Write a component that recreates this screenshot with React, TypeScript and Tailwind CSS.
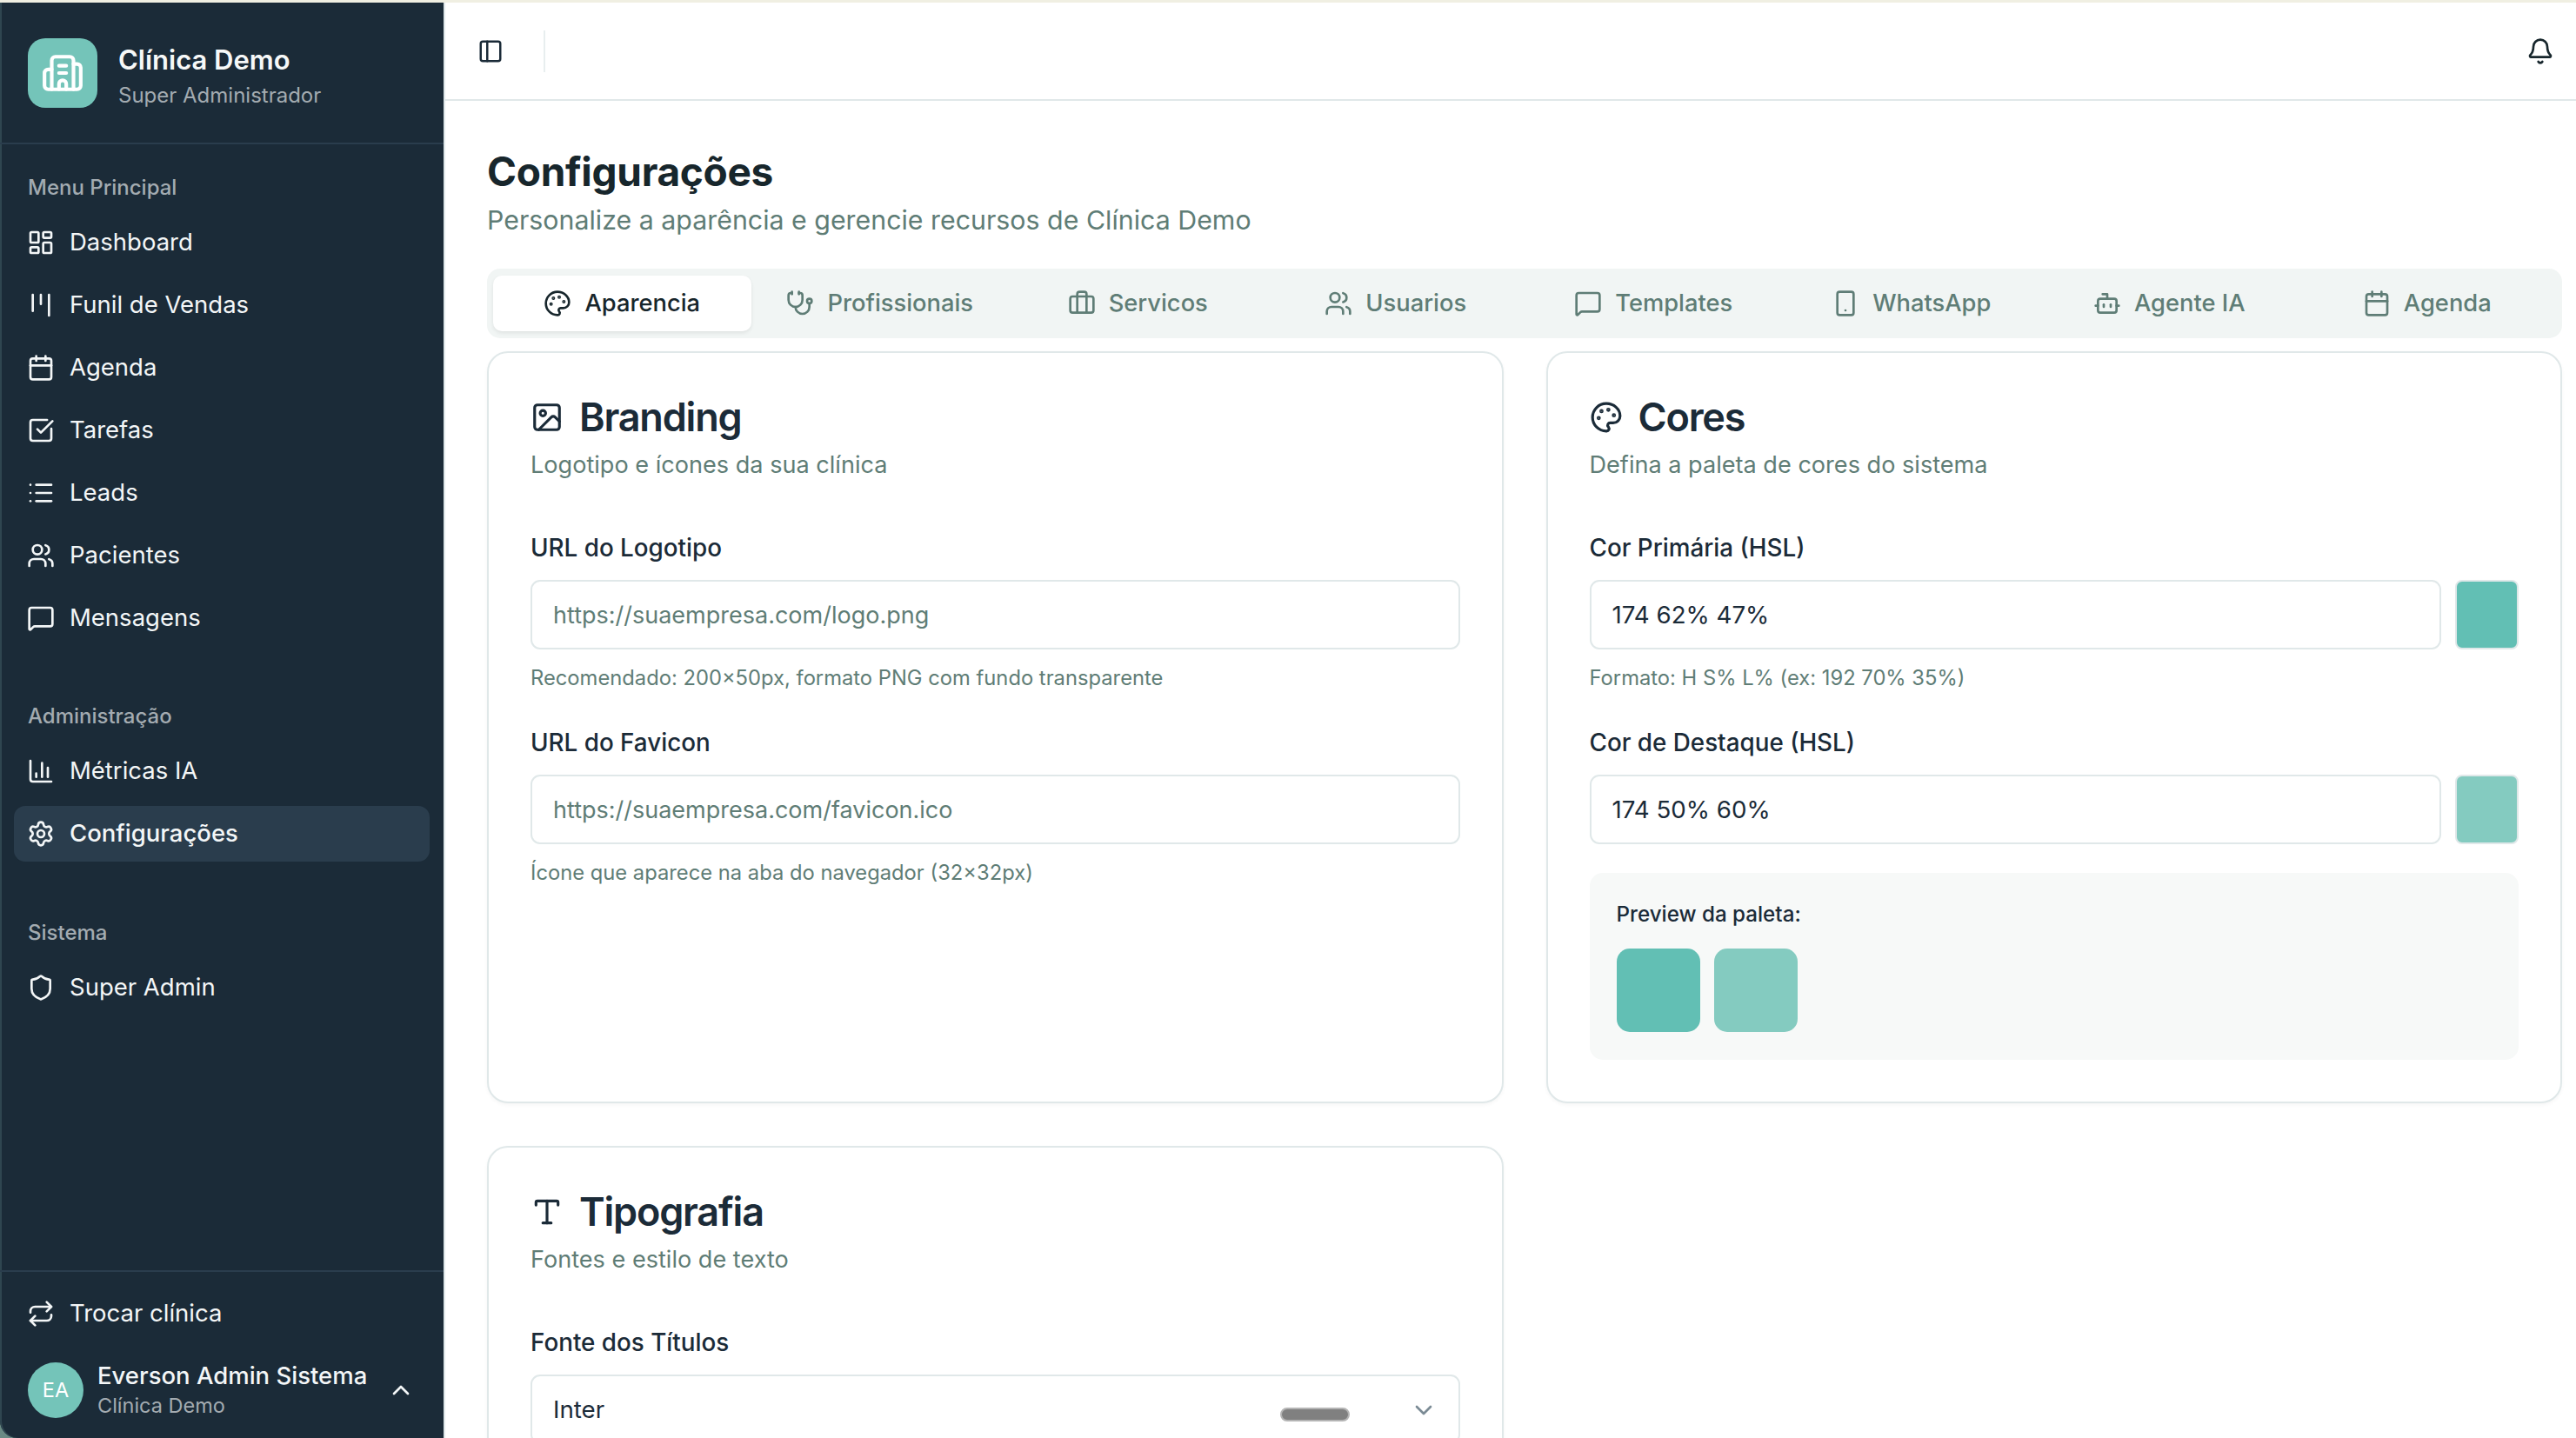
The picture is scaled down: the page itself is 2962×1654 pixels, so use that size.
import { Bell, Bot, Briefcase, Building2, Calendar, ChartColumn, ChevronDown, ChevronUp, Image, Kanban, LayoutDashboard, List, MessageSquare, Palette, PanelLeft, Repeat, Settings, Shield, Smartphone, SquareCheckBig, Stethoscope, Type, Users } from "lucide-react";
import type { ComponentType } from "react";

type Ic = ComponentType<{ className?: string; strokeWidth?: number }>;

function NavItem({ icon: I, label, active }: { icon: Ic; label: string; active?: boolean }) {
  return (
    <div className={`flex h-[64px] items-center gap-[17px] rounded-[13px] px-[15px] text-[27.5px] text-[#f3f6f7] ${active ? "bg-[#2a3d4d] font-medium" : ""}`}>
      <I className="size-[32px] shrink-0" strokeWidth={2} />
      <span>{label}</span>
    </div>
  );
}

function SectionLabel({ children }: { children: string }) {
  return <div className="flex h-[63px] items-center px-[16px] text-[24px] font-medium text-[#a3abb1]">{children}</div>;
}

function Tab({ icon: I, label, active }: { icon: Ic; label: string; active?: boolean }) {
  return (
    <div className={`flex h-[64px] items-center justify-center gap-[15px] rounded-[10px] text-[27.3px] font-medium ${active ? "bg-white text-[#17262c] shadow-[0_2px_4px_rgba(0,0,0,0.08)]" : "text-[#5f7d76]"}`}>
      <I className="size-[32px] shrink-0" strokeWidth={2} />
      <span>{label}</span>
    </div>
  );
}

function Card({ className, children }: { className?: string; children: React.ReactNode }) {
  return <div className={`rounded-[24px] border-2 border-[#e0e8e9] bg-white px-[48px] pt-[46px] shadow-[0_2px_4px_rgba(0,0,0,0.04)] ${className ?? ""}`}>{children}</div>;
}

function CardHead({ icon: I, title, desc }: { icon: Ic; title: string; desc: string }) {
  return (
    <div>
      <div className="flex h-[56px] items-center gap-[18px] text-[45px] font-semibold tracking-[-1.2px] text-[#1b2b38]">
        <I className="size-[38px] shrink-0" strokeWidth={2} />
        <span>{title}</span>
      </div>
      <div className="mt-[7px] h-[40px] text-[27.1px] leading-[40px] text-[#5f7d76]">{desc}</div>
    </div>
  );
}

function Field({ label, value, placeholder, hint, color }: { label: string; value?: string; placeholder?: string; hint?: string; color?: string }) {
  return (
    <div>
      <div className="flex h-[40px] items-center text-[27.8px] font-medium text-[#1b2b38]">{label}</div>
      <div className="mt-[16px] flex gap-[16px]">
        <div className={`flex h-[80px] flex-1 items-center rounded-[11px] border-2 border-[#e0e8e9] px-[24px] pt-[2px] ${placeholder ? "text-[27px] text-[#5f7d76]" : "text-[27.7px] text-[#1b2b38]"}`}>
          {value ?? placeholder}
        </div>
        {color && <div className={`h-[80px] w-[73px] rounded-[8px] border-2 border-[#e0e8e9] ${color}`} />}
      </div>
      {hint && <div className="mt-[16px] flex h-[34px] items-center text-[23.75px] text-[#5f7d76]">{hint}</div>}
    </div>
  );
}

const nav1: [Ic, string][] = [
  [LayoutDashboard, "Dashboard"],
  [Kanban, "Funil de Vendas"],
  [Calendar, "Agenda"],
  [SquareCheckBig, "Tarefas"],
  [List, "Leads"],
  [Users, "Pacientes"],
  [MessageSquare, "Mensagens"],
];

const tabs: [Ic, string][] = [
  [Stethoscope, "Profissionais"],
  [Briefcase, "Servicos"],
  [Users, "Usuarios"],
  [MessageSquare, "Templates"],
  [Smartphone, "WhatsApp"],
  [Bot, "Agente IA"],
  [Calendar, "Agenda"],
];

export default function App() {
  return (
    <div className="flex h-[1654px] w-[2962px] flex-col overflow-hidden bg-white font-['Inter',sans-serif]">
      <div className="h-[3px] shrink-0 bg-[#f0efe2]" />
      <div className="flex min-h-0 flex-1 bg-[#6a8a84]">
        <aside className="flex w-[510px] shrink-0 flex-col rounded-bl-[20px] bg-[#1b2b38] shadow-[inset_2px_0_0_#2f4650]">
          <div className="flex h-[163px] shrink-0 items-center gap-[24px] border-b-2 border-[#2a3d4d] pl-[32px]">
            <div className="flex size-[80px] items-center justify-center rounded-[20px] bg-[#74c4b9] text-white">
              <Building2 className="size-[50px]" strokeWidth={2} />
            </div>
            <div className="pt-[5px]">
              <div className="text-[31px] leading-[44px] font-semibold text-[#f6f8f8]">Clínica Demo</div>
              <div className="mt-[3px] text-[24px] leading-[32px] text-[#a3abb1]">Super Administrador</div>
            </div>
          </div>
          <nav className="flex-1 px-[16px] pt-[18px]">
            <SectionLabel>Menu Principal</SectionLabel>
            <div className="flex flex-col gap-[8px]">
              {nav1.map(([i, l]) => <NavItem key={l} icon={i} label={l} />)}
            </div>
            <div className="mt-[49px]"><SectionLabel>Administração</SectionLabel></div>
            <div className="flex flex-col gap-[8px]">
              <NavItem icon={ChartColumn} label="Métricas IA" />
              <NavItem icon={Settings} label="Configurações" active />
            </div>
            <div className="mt-[50px]"><SectionLabel>Sistema</SectionLabel></div>
            <NavItem icon={Shield} label="Super Admin" />
          </nav>
          <div className="h-[193px] shrink-0 border-t-2 border-[#2a3d4d] px-[16px] pt-[16px]">
            <NavItem icon={Repeat} label="Trocar clínica" />
            <div className="mt-[21px] flex items-center pr-[17px] pl-[16px]">
              <div className="flex size-[64px] shrink-0 items-center justify-center rounded-full bg-[#74c4b9] text-[23.5px] text-white">EA</div>
              <div className="ml-[16px] flex-1">
                <div className="text-[27.5px] leading-[36px] font-medium text-[#f3f6f7]">Everson Admin Sistema</div>
                <div className="text-[23.5px] leading-[34px] text-[#a3abb1]">Clínica Demo</div>
              </div>
              <ChevronUp className="size-[32px] text-[#f3f6f7]" strokeWidth={2} />
            </div>
          </div>
        </aside>

        <div className="flex min-w-0 flex-1 flex-col border-l-2 border-[#dfe7e9] bg-white">
          <header className="flex h-[113px] shrink-0 items-center border-b-2 border-[#e0e8e9] pr-[25px] pl-[37px]">
            <PanelLeft className="size-[30px] text-[#1b2b38]" strokeWidth={2} />
            <div className="ml-[46px] h-[48px] w-[2px] bg-[#e8eeef]" />
            <div className="flex-1" />
            <Bell className="size-[32px] text-[#17262c]" strokeWidth={2} />
          </header>

          <main className="min-h-0 flex-1 pr-[16px] pl-[48px]">
            <h1 className="mt-[49px] text-[46px] leading-[64px] font-bold tracking-[-0.3px] text-[#17262c]">Configurações</h1>
            <p className="mt-[2px] text-[30.35px] leading-[44px] text-[#5f7d76]">Personalize a aparência e gerencie recursos de Clínica Demo</p>
            <div className="mt-[34px] grid h-[80px] grid-cols-8 items-center rounded-[15px] bg-[#f1f5f4] px-[7px]">
              <Tab icon={Palette} label="Aparencia" active />
              {tabs.map(([i, l]) => <Tab key={l} icon={i} label={l} />)}
            </div>

            <div className="mt-[15px] grid grid-cols-2 gap-x-[49px] gap-y-[49px]">
              <Card className="h-[865px]">
                <CardHead icon={Image} title="Branding" desc="Logotipo e ícones da sua clínica" />
                <div className="mt-[56px] flex flex-col gap-[38px]">
                  <Field label="URL do Logotipo" placeholder="https://suaempresa.com/logo.png" hint="Recomendado: 200x50px, formato PNG com fundo transparente" />
                  <Field label="URL do Favicon" placeholder="https://suaempresa.com/favicon.ico" hint="Ícone que aparece na aba do navegador (32x32px)" />
                </div>
              </Card>
              <Card className="h-[865px]">
                <CardHead icon={Palette} title="Cores" desc="Defina a paleta de cores do sistema" />
                <div className="mt-[56px] flex flex-col gap-[38px]">
                  <Field label="Cor Primária (HSL)" value="174 62% 47%" hint="Formato: H S% L% (ex: 192 70% 35%)" color="bg-[#62bfb4]" />
                  <Field label="Cor de Destaque (HSL)" value="174 50% 60%" color="bg-[#84cbc0]" />
                </div>
                <div className="mt-[33px] h-[215px] rounded-[15px] bg-[#f7f9f8] px-[31px] pt-[31px]">
                  <div className="flex h-[34px] items-center text-[24.2px] font-medium text-[#1b2b38]">Preview da paleta:</div>
                  <div className="mt-[22px] flex gap-[16px]">
                    <div className="size-[96px] rounded-[15px] bg-[#62bfb4]" />
                    <div className="size-[96px] rounded-[15px] bg-[#84cbc0]" />
                  </div>
                </div>
              </Card>
              <Card className="h-[500px]">
                <CardHead icon={Type} title="Tipografia" desc="Fontes e estilo de texto" />
                <div className="mt-[56px] flex h-[40px] items-center text-[27.8px] font-medium text-[#1b2b38]">Fonte dos Títulos</div>
                <div className="relative mt-[16px] flex h-[80px] items-center rounded-[11px] border-2 border-[#e0e8e9] pt-[2px] pr-[24px] pl-[24px] text-[27.7px] text-[#1b2b38]">
                  <span className="flex-1">Inter</span>
                  <ChevronDown className="size-[32px] text-[#7b8b95]" strokeWidth={2} />
                  <div className="absolute top-[36px] left-[860px] h-[16px] w-[80px] rounded-full border-2 border-[#b4b4b4] bg-[#808080]" />
                </div>
              </Card>
            </div>
          </main>
        </div>
      </div>
    </div>
  );
}
